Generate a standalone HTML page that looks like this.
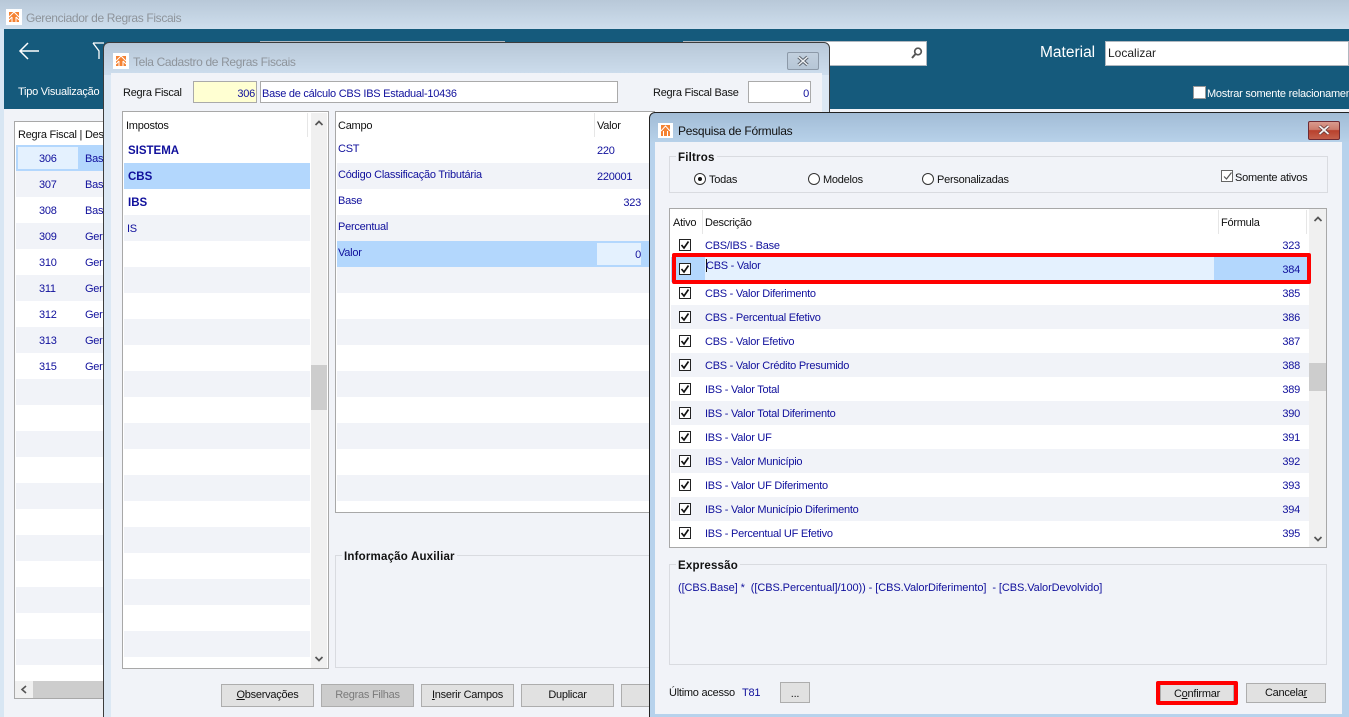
<!DOCTYPE html>
<html><head><meta charset="utf-8"><title>Pesquisa de Fórmulas</title>
<style>
html{margin:0;padding:0;width:1349px;height:717px;overflow:hidden}
body{margin:0;padding:0;width:1349px;height:717px;overflow:hidden;position:relative;background:#f1f3f8;font-family:"Liberation Sans",sans-serif;font-size:11px;letter-spacing:-.25px;color:#111}
div,span.t{position:absolute;box-sizing:border-box}
.t{white-space:nowrap;height:16px;line-height:16px;margin-top:1px}
.b{color:#10109c}
.r{text-align:right}
.w{background:#fff}.g{background:#f1f3f8}
.btn{background:#e1e1e1;border:1px solid #adadad;text-align:center;line-height:21px;color:#111;height:23px;white-space:nowrap}
.fs{border:1px solid #d9dbe0}
.lg{font-weight:bold;font-size:11.5px;background:#f1f3f8;padding:0 2px;height:16px;line-height:16px;letter-spacing:.2px}
.box{border:1px solid #a8a8a8;background:#fff}
.sb{background:#f0f0f0}
.chk{width:12px;height:12px;border:1px solid #222;background:#fff}
.chk svg{position:absolute;left:0;top:0}
.rad{width:12px;height:12px;border:1px solid #333;border-radius:50%;background:#fff}
.x{font-weight:bold;font-size:11.5px;letter-spacing:0}
svg{position:absolute;display:block}
</style></head><body>

<!-- main window -->
<div style="left:0;top:0;width:1349px;height:29px;background:linear-gradient(#b8c8d8,#cedeed)"></div>
<svg style="left:6px;top:9px" width="16" height="16" viewBox="0 0 16 16"><rect width="16" height="16" fill="#fff"/><rect x="3" y="3" width="10" height="10" fill="#f58232"/><path d="M3 8l5-5 5 5M6 13V8M10 13V8M3 11l3-3M13 11l-3-3" stroke="#fff" stroke-width="1" fill="none"/></svg>
<span class="t" style="left:26px;top:9px;color:#8e949b;font-size:12px;letter-spacing:-.35px">Gerenciador de Regras Fiscais</span>
<div style="left:0;top:29px;width:4px;height:688px;background:#d8e6f3"></div>
<div style="left:4px;top:29px;width:1345px;height:80px;background:#155a7c"></div>
<svg style="left:18px;top:41px" width="22" height="20" viewBox="0 0 22 20"><path d="M21 10H2M10 2L2 10l8 8" stroke="#fff" stroke-width="1.5" fill="none"/></svg>
<svg style="left:92px;top:41px" width="12" height="20" viewBox="0 0 12 20"><path d="M1 2H12M1 2l6 8v8" stroke="#fff" stroke-width="1.3" fill="none"/></svg>
<span class="t" style="left:18px;top:83px;color:#fff">Tipo Visualização</span>
<div style="left:260px;top:41px;width:245px;height:25px;background:#fff;border:1px solid #b0b8c0"></div>
<div style="left:683px;top:41px;width:244px;height:25px;background:#fff;border:1px solid #b0b8c0"></div>
<svg style="left:910px;top:46px" width="13" height="14" viewBox="0 0 13 14"><circle cx="8" cy="5.5" r="3.3" stroke="#555" stroke-width="1.7" fill="none"/><path d="M5.5 8L2 12" stroke="#555" stroke-width="2"/></svg>
<span class="t" style="left:1040px;top:43px;color:#fff;font-size:15.5px;height:18px;line-height:18px;letter-spacing:0">Material</span>
<div style="left:1105px;top:41px;width:244px;height:25px;background:#fff;border:1px solid #b0b8c0"></div>
<span class="t" style="left:1108px;top:44px;font-size:12px;color:#222;letter-spacing:0">Localizar</span>
<div style="left:1193px;top:86px;width:13px;height:13px;background:#fff;border:1px solid #999"></div>
<span class="t" style="left:1207px;top:85px;color:#fff">Mostrar somente relacionamentos</span>
<div style="left:829px;top:109px;width:520px;height:4px;background:#f1f3f8"></div>

<!-- main grid -->
<div class="box" style="left:14px;top:121px;width:100px;height:578px"></div>
<span class="t" style="left:18px;top:126px">Regra Fiscal | Descrição</span>
<div style="left:16px;top:145px;width:88px;height:26px;background:#b3d7fd"></div>
<div style="left:18px;top:147px;width:60px;height:22px;background:#e4f1fe"></div>
<div class="g" style="left:16px;top:171px;width:88px;height:26px"></div>
<div class="g" style="left:16px;top:223px;width:88px;height:26px"></div>
<div class="g" style="left:16px;top:275px;width:88px;height:26px"></div>
<div class="g" style="left:16px;top:327px;width:88px;height:26px"></div>
<div class="g" style="left:16px;top:379px;width:88px;height:26px"></div>
<div class="g" style="left:16px;top:431px;width:88px;height:26px"></div>
<div class="g" style="left:16px;top:483px;width:88px;height:26px"></div>
<div class="g" style="left:16px;top:535px;width:88px;height:26px"></div>
<div class="g" style="left:16px;top:587px;width:88px;height:26px"></div>
<div class="g" style="left:16px;top:639px;width:88px;height:26px"></div>
<span class="t b" style="left:39px;top:150px">306</span><span class="t b" style="left:85px;top:150px">Bas</span>
<span class="t b" style="left:39px;top:176px">307</span><span class="t b" style="left:85px;top:176px">Bas</span>
<span class="t b" style="left:39px;top:202px">308</span><span class="t b" style="left:85px;top:202px">Bas</span>
<span class="t b" style="left:39px;top:228px">309</span><span class="t b" style="left:85px;top:228px">Ger</span>
<span class="t b" style="left:39px;top:254px">310</span><span class="t b" style="left:85px;top:254px">Ger</span>
<span class="t b" style="left:39px;top:280px">311</span><span class="t b" style="left:85px;top:280px">Ger</span>
<span class="t b" style="left:39px;top:306px">312</span><span class="t b" style="left:85px;top:306px">Ger</span>
<span class="t b" style="left:39px;top:332px">313</span><span class="t b" style="left:85px;top:332px">Ger</span>
<span class="t b" style="left:39px;top:358px">315</span><span class="t b" style="left:85px;top:358px">Ger</span>
<div class="sb" style="left:15px;top:681px;width:89px;height:17px"></div>
<div style="left:33px;top:681px;width:71px;height:17px;background:#cdcdcd"></div>
<svg style="left:20px;top:685px" width="8" height="9" viewBox="0 0 8 9"><path d="M6 1L2 4.5 6 8" stroke="#555" stroke-width="1.6" fill="none"/></svg>

<!-- window 2 -->
<div style="left:103px;top:42px;width:727px;height:680px;border:1px solid #3c3c3c;border-radius:6px 6px 0 0;background:linear-gradient(#b8c8d8 0,#cddded 32px,#dce8f4 32px)"></div>
<div style="left:111px;top:73px;width:711px;height:644px;background:#f1f3f8"></div>
<svg style="left:113px;top:53px" width="16" height="16" viewBox="0 0 16 16"><rect width="16" height="16" fill="#fff"/><rect x="3" y="3" width="10" height="10" fill="#f58232"/><path d="M3 8l5-5 5 5M6 13V8M10 13V8M3 11l3-3M13 11l-3-3" stroke="#fff" stroke-width="1" fill="none"/></svg>
<span class="t" style="left:133px;top:53px;color:#8e949b;font-size:12px;letter-spacing:-.35px">Tela Cadastro de Regras Fiscais</span>
<div style="left:787px;top:52px;width:32px;height:18px;border:1px solid #8c99a8;border-radius:2px;background:linear-gradient(#c2d0de,#b6c6d6)"></div>
<svg style="left:796px;top:55px" width="14" height="12" viewBox="0 0 14 12"><path d="M2.5 2l9 8M11.5 2l-9 8" stroke="#59616b" stroke-width="3.4"/><path d="M2.5 2l9 8M11.5 2l-9 8" stroke="#eef1f4" stroke-width="1.5"/></svg>

<span class="t" style="left:123px;top:84px">Regra Fiscal</span>
<div style="left:193px;top:81px;width:64px;height:22px;background:#ffffd2;border:1px solid #aaa"></div>
<span class="t b r" style="left:193px;top:85px;width:62px">306</span>
<div style="left:260px;top:81px;width:358px;height:22px;background:#fff;border:1px solid #aaa"></div>
<span class="t b" style="left:262px;top:85px">Base de cálculo CBS IBS Estadual-10436</span>
<span class="t" style="left:653px;top:84px">Regra Fiscal Base</span>
<div style="left:748px;top:81px;width:63px;height:22px;background:#fff;border:1px solid #aaa"></div>
<span class="t b r" style="left:748px;top:85px;width:61px">0</span>

<!-- impostos -->
<div class="box" style="left:122px;top:111px;width:207px;height:558px"></div>
<div style="left:124px;top:163px;width:186px;height:26px;background:#b3d7fd"></div>
<div class="g" style="left:124px;top:215px;width:186px;height:26px"></div>
<div class="g" style="left:124px;top:267px;width:186px;height:26px"></div>
<div class="g" style="left:124px;top:319px;width:186px;height:26px"></div>
<div class="g" style="left:124px;top:371px;width:186px;height:26px"></div>
<div class="g" style="left:124px;top:423px;width:186px;height:26px"></div>
<div class="g" style="left:124px;top:475px;width:186px;height:26px"></div>
<div class="g" style="left:124px;top:527px;width:186px;height:26px"></div>
<div class="g" style="left:124px;top:579px;width:186px;height:26px"></div>
<div class="g" style="left:124px;top:631px;width:186px;height:26px"></div>
<div style="left:307px;top:113px;width:1px;height:24px;background:#e6e6e6"></div>
<span class="t" style="left:126px;top:117px">Impostos</span>
<span class="t b x" style="left:128px;top:142px">SISTEMA</span>
<span class="t b x" style="left:128px;top:168px">CBS</span>
<span class="t b x" style="left:128px;top:194px">IBS</span>
<span class="t b" style="left:127px;top:220px">IS</span>
<div class="sb" style="left:311px;top:113px;width:16px;height:555px"></div>
<div style="left:311px;top:365px;width:16px;height:45px;background:#cdcdcd"></div>
<svg style="left:314px;top:119px" width="10" height="8" viewBox="0 0 10 8"><path d="M1.5 6L5 2.5 8.500 6" stroke="#555" stroke-width="1.7" fill="none"/></svg>
<svg style="left:314px;top:655px" width="10" height="8" viewBox="0 0 10 8"><path d="M1.500 2L5 5.500 8.500 2" stroke="#555" stroke-width="1.700" fill="none"/></svg>

<!-- campos -->
<div class="box" style="left:335px;top:111px;width:320px;height:402px"></div>
<div class="g" style="left:337px;top:163px;width:312px;height:26px"></div>
<div class="g" style="left:337px;top:215px;width:312px;height:26px"></div>
<div style="left:337px;top:241px;width:312px;height:26px;background:#b3d7fd"></div>
<div style="left:597px;top:243px;width:44px;height:22px;background:#e4f1fe"></div>
<div class="g" style="left:337px;top:267px;width:312px;height:26px"></div>
<div class="g" style="left:337px;top:319px;width:312px;height:26px"></div>
<div class="g" style="left:337px;top:371px;width:312px;height:26px"></div>
<div class="g" style="left:337px;top:423px;width:312px;height:26px"></div>
<div class="g" style="left:337px;top:475px;width:312px;height:26px"></div>
<div style="left:594px;top:113px;width:1px;height:24px;background:#e6e6e6"></div>
<span class="t" style="left:338px;top:117px">Campo</span>
<span class="t" style="left:597px;top:117px">Valor</span>
<span class="t b" style="left:338px;top:140px">CST</span>
<span class="t b" style="left:597px;top:142px">220</span>
<span class="t b" style="left:338px;top:166px">Código Classificação Tributária</span>
<span class="t b" style="left:597px;top:168px">220001</span>
<span class="t b" style="left:338px;top:192px">Base</span>
<span class="t b r" style="left:600px;top:194px;width:41px">323</span>
<span class="t b" style="left:338px;top:218px">Percentual</span>
<span class="t b" style="left:338px;top:244px">Valor</span>
<span class="t b r" style="left:600px;top:246px;width:41px">0</span>

<div class="fs" style="left:335px;top:555px;width:320px;height:113px"></div>
<span class="t lg" style="left:342px;top:548px;position:absolute">Informação Auxiliar</span>

<div class="btn" style="left:221px;top:684px;width:93px"><u>O</u>bservações</div>
<div class="btn" style="left:321px;top:684px;width:93px;background:#cccccc;color:#7a7a7a">Regras Filhas</div>
<div class="btn" style="left:421px;top:684px;width:93px"><u>I</u>nserir Campos</div>
<div class="btn" style="left:521px;top:684px;width:93px">Duplicar</div>
<div class="btn" style="left:621px;top:684px;width:40px"></div>

<!-- window 3 -->
<div style="left:649px;top:112px;width:705px;height:610px;border:1px solid #222;border-radius:6px 6px 0 0;background:linear-gradient(#a2bcd6 0,#b8d2ea 30px,#b7d2ec 30px)"></div>
<div style="left:655px;top:142px;width:687px;height:572px;background:#f1f3f8"></div>
<svg style="left:658px;top:123px" width="15" height="15" viewBox="0 0 15 15"><rect width="15" height="15" fill="#fff"/><rect x="3" y="2" width="9" height="11" fill="#f58232"/><path d="M3 8l4.500-5L12 8M5.500 13V8M9.500 13V8" stroke="#fff" stroke-width="1" fill="none"/></svg>
<span class="t" style="left:678px;top:122px;font-size:12px;color:#111;letter-spacing:-.25px">Pesquisa de Fórmulas</span>
<div style="left:1308px;top:121px;width:32px;height:19px;border:1px solid #6e2a33;border-radius:2px;background:linear-gradient(#d99a8e 0,#cc7b6c 45%,#b8402c 50%,#c4604c 100%)"></div>
<svg style="left:1317px;top:124px" width="14" height="12" viewBox="0 0 14 12"><path d="M2.500 2l9 8M11.500 2l-9 8" stroke="#6a3a3a" stroke-width="3.400"/><path d="M2.500 2l9 8M11.500 2l-9 8" stroke="#f4f4f4" stroke-width="1.800"/></svg>

<div class="fs" style="left:669px;top:156px;width:659px;height:37px"></div>
<span class="t lg" style="left:676px;top:149px;position:absolute">Filtros</span>
<div class="rad" style="left:694px;top:173px"></div><div style="left:698px;top:177px;width:4px;height:4px;border-radius:50%;background:#111"></div>
<span class="t" style="left:709px;top:171px">Todas</span>
<div class="rad" style="left:808px;top:173px"></div>
<span class="t" style="left:823px;top:171px">Modelos</span>
<div class="rad" style="left:922px;top:173px"></div>
<span class="t" style="left:937px;top:171px">Personalizadas</span>
<div class="chk" style="left:1221px;top:170px;border-color:#666"><svg width="11" height="11" viewBox="0 0 11 11"><path d="M2 5.500L4.500 8 9.500 1.500" stroke="#555" stroke-width="1.200" fill="none"/></svg></div>
<span class="t" style="left:1235px;top:169px">Somente ativos</span>

<!-- formula grid -->
<div class="box" style="left:669px;top:208px;width:658px;height:340px"></div>
<div style="left:702px;top:210px;width:1px;height:24px;background:#e6e6e6"></div>
<div style="left:1218px;top:210px;width:1px;height:24px;background:#e6e6e6"></div>
<div style="left:1306px;top:210px;width:1px;height:24px;background:#e6e6e6"></div>
<span class="t" style="left:673px;top:214px">Ativo</span>
<span class="t" style="left:705px;top:214px">Descrição</span>
<span class="t" style="left:1221px;top:214px">Fórmula</span>

<div class="g" style="left:671px;top:305px;width:638px;height:24px"></div>
<div class="g" style="left:671px;top:353px;width:638px;height:24px"></div>
<div class="g" style="left:671px;top:401px;width:638px;height:24px"></div>
<div class="g" style="left:671px;top:449px;width:638px;height:24px"></div>
<div class="g" style="left:671px;top:497px;width:638px;height:24px"></div>

<div style="left:671px;top:257px;width:638px;height:25px;background:#e4f1fe"></div>
<div style="left:671px;top:257px;width:34px;height:25px;background:#b3d7fd"></div>
<div style="left:1214px;top:257px;width:95px;height:25px;background:#b3d7fd"></div>

<div class="chk" style="left:679px;top:239px"><svg width="10" height="10" viewBox="0 0 10 10"><path d="M1.500 5L4 8 8.500 1.500" stroke="#111" stroke-width="1.700" fill="none"/></svg></div>
<div class="chk" style="left:679px;top:263px"><svg width="10" height="10" viewBox="0 0 10 10"><path d="M1.500 5L4 8 8.500 1.500" stroke="#111" stroke-width="1.700" fill="none"/></svg></div>
<div class="chk" style="left:679px;top:287px"><svg width="10" height="10" viewBox="0 0 10 10"><path d="M1.500 5L4 8 8.500 1.500" stroke="#111" stroke-width="1.700" fill="none"/></svg></div>
<div class="chk" style="left:679px;top:311px"><svg width="10" height="10" viewBox="0 0 10 10"><path d="M1.500 5L4 8 8.500 1.500" stroke="#111" stroke-width="1.700" fill="none"/></svg></div>
<div class="chk" style="left:679px;top:335px"><svg width="10" height="10" viewBox="0 0 10 10"><path d="M1.500 5L4 8 8.500 1.500" stroke="#111" stroke-width="1.700" fill="none"/></svg></div>
<div class="chk" style="left:679px;top:359px"><svg width="10" height="10" viewBox="0 0 10 10"><path d="M1.500 5L4 8 8.500 1.500" stroke="#111" stroke-width="1.700" fill="none"/></svg></div>
<div class="chk" style="left:679px;top:383px"><svg width="10" height="10" viewBox="0 0 10 10"><path d="M1.500 5L4 8 8.500 1.500" stroke="#111" stroke-width="1.700" fill="none"/></svg></div>
<div class="chk" style="left:679px;top:407px"><svg width="10" height="10" viewBox="0 0 10 10"><path d="M1.500 5L4 8 8.500 1.500" stroke="#111" stroke-width="1.700" fill="none"/></svg></div>
<div class="chk" style="left:679px;top:431px"><svg width="10" height="10" viewBox="0 0 10 10"><path d="M1.500 5L4 8 8.500 1.500" stroke="#111" stroke-width="1.700" fill="none"/></svg></div>
<div class="chk" style="left:679px;top:455px"><svg width="10" height="10" viewBox="0 0 10 10"><path d="M1.500 5L4 8 8.500 1.500" stroke="#111" stroke-width="1.700" fill="none"/></svg></div>
<div class="chk" style="left:679px;top:479px"><svg width="10" height="10" viewBox="0 0 10 10"><path d="M1.500 5L4 8 8.500 1.500" stroke="#111" stroke-width="1.700" fill="none"/></svg></div>
<div class="chk" style="left:679px;top:503px"><svg width="10" height="10" viewBox="0 0 10 10"><path d="M1.500 5L4 8 8.500 1.500" stroke="#111" stroke-width="1.700" fill="none"/></svg></div>
<div class="chk" style="left:679px;top:527px"><svg width="10" height="10" viewBox="0 0 10 10"><path d="M1.500 5L4 8 8.500 1.500" stroke="#111" stroke-width="1.700" fill="none"/></svg></div>

<span class="t b" style="left:705px;top:237px">CBS/IBS - Base</span><span class="t b r" style="left:1250px;top:237px;width:50px">323</span>
<div style="left:706px;top:259px;width:1px;height:13px;background:#111"></div>
<span class="t b" style="left:706px;top:257px">CBS - Valor</span><span class="t b r" style="left:1250px;top:261px;width:50px">384</span>
<span class="t b" style="left:705px;top:285px">CBS - Valor Diferimento</span><span class="t b r" style="left:1250px;top:285px;width:50px">385</span>
<span class="t b" style="left:705px;top:309px">CBS - Percentual Efetivo</span><span class="t b r" style="left:1250px;top:309px;width:50px">386</span>
<span class="t b" style="left:705px;top:333px">CBS - Valor Efetivo</span><span class="t b r" style="left:1250px;top:333px;width:50px">387</span>
<span class="t b" style="left:705px;top:357px">CBS - Valor Crédito Presumido</span><span class="t b r" style="left:1250px;top:357px;width:50px">388</span>
<span class="t b" style="left:705px;top:381px">IBS - Valor Total</span><span class="t b r" style="left:1250px;top:381px;width:50px">389</span>
<span class="t b" style="left:705px;top:405px">IBS - Valor Total Diferimento</span><span class="t b r" style="left:1250px;top:405px;width:50px">390</span>
<span class="t b" style="left:705px;top:429px">IBS - Valor UF</span><span class="t b r" style="left:1250px;top:429px;width:50px">391</span>
<span class="t b" style="left:705px;top:453px">IBS - Valor Município</span><span class="t b r" style="left:1250px;top:453px;width:50px">392</span>
<span class="t b" style="left:705px;top:477px">IBS - Valor UF Diferimento</span><span class="t b r" style="left:1250px;top:477px;width:50px">393</span>
<span class="t b" style="left:705px;top:501px">IBS - Valor Município Diferimento</span><span class="t b r" style="left:1250px;top:501px;width:50px">394</span>
<span class="t b" style="left:705px;top:525px">IBS - Percentual UF Efetivo</span><span class="t b r" style="left:1250px;top:525px;width:50px">395</span>

<div class="sb" style="left:1309px;top:209px;width:17px;height:338px"></div>
<div style="left:1309px;top:363px;width:17px;height:28px;background:#cdcdcd"></div>
<svg style="left:1313px;top:215px" width="10" height="8" viewBox="0 0 10 8"><path d="M1.500 6L5 2.500 8.500 6" stroke="#555" stroke-width="1.700" fill="none"/></svg>
<svg style="left:1313px;top:535px" width="10" height="8" viewBox="0 0 10 8"><path d="M1.500 2L5 5.500 8.500 2" stroke="#555" stroke-width="1.700" fill="none"/></svg>

<div style="left:672px;top:253px;width:639px;height:31px;border:4px solid #f00;border-radius:2px"></div>

<div class="fs" style="left:669px;top:564px;width:658px;height:101px"></div>
<span class="t lg" style="left:676px;top:557px;position:absolute">Expressão</span>
<span class="t b" style="left:678px;top:579px;letter-spacing:-.08px">([CBS.Base] *&nbsp; ([CBS.Percentual]/100)) - [CBS.ValorDiferimento]&nbsp; - [CBS.ValorDevolvido]</span>

<span class="t" style="left:669px;top:684px">Último acesso</span>
<span class="t b" style="left:742px;top:684px">T81</span>
<div class="btn" style="left:780px;top:682px;width:30px;height:21px;line-height:22px">...</div>
<div class="btn" style="left:1160px;top:684px;width:74px;height:20px;line-height:19px">C<u>o</u>nfirmar</div>
<div style="left:1156px;top:681px;width:82px;height:24px;border:4px solid #f00;border-radius:2px"></div>
<div class="btn" style="left:1246px;top:683px;width:80px;height:20px;line-height:19px">Cancela<u>r</u></div>
</body></html>
